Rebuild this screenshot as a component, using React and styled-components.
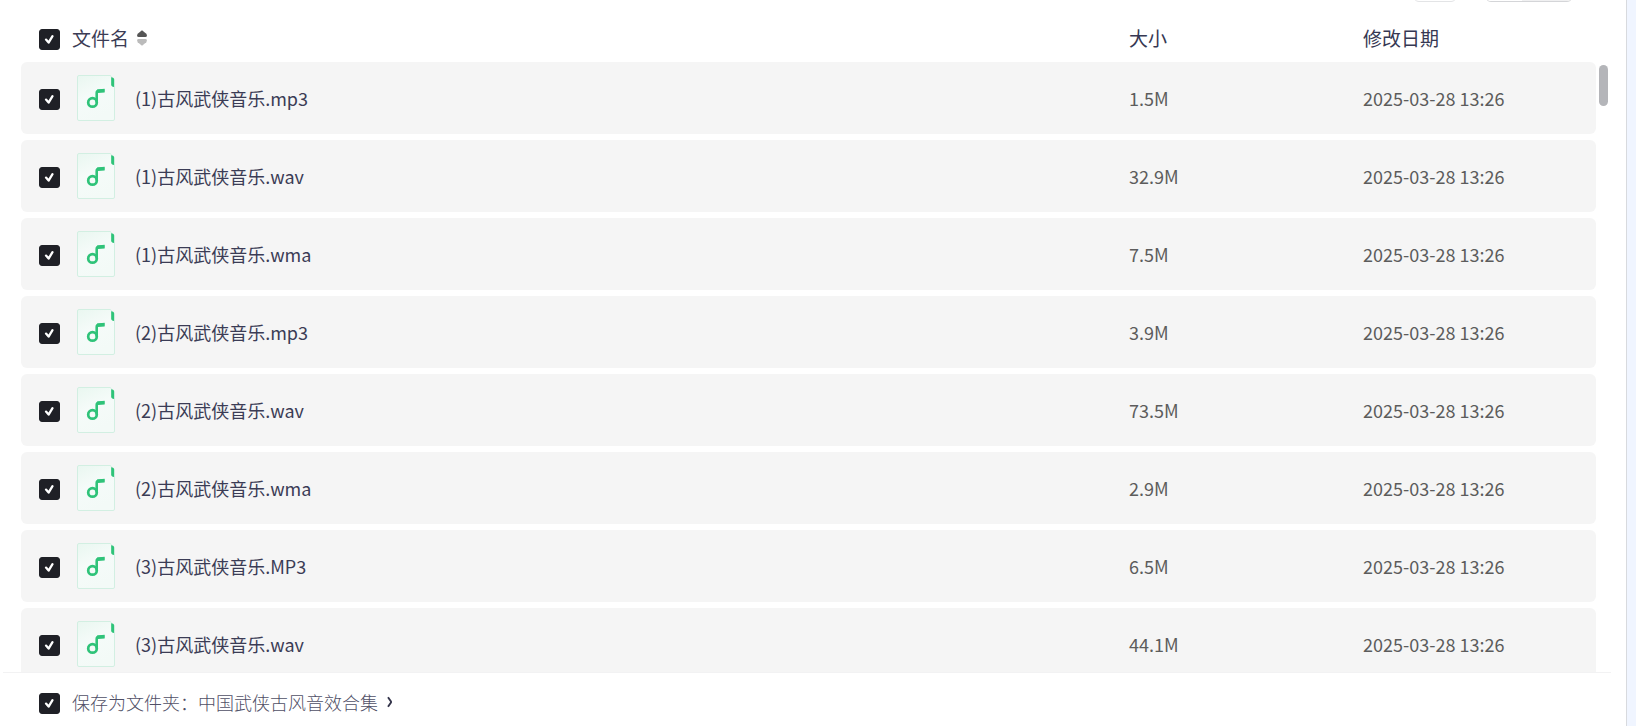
import { useState } from "react";
import styled, { createGlobalStyle } from "styled-components";

const GlobalStyle = createGlobalStyle`
  * {
    box-sizing: border-box;
  }

  body {
    margin: 0;
    background: #f0f5ff;
    font-family: "Noto Sans CJK SC", "Noto Sans", sans-serif;
    font-size: 18px;
    line-height: 26px;
    overflow: hidden;
  }
`;

const Panel = styled.main`
  display: flex;
  flex-direction: column;
  height: 100vh;
  margin-right: 9px;
  border-right: 1px solid #d8dade;
  background: #fff;
`;

const Toolbar = styled.div`
  display: flex;
  flex: none;
  justify-content: flex-end;
  align-items: flex-end;
  gap: 28px;
  height: 2px;
  padding-right: 53px;
  overflow: hidden;
`;

const ToolButton = styled.button`
  flex: none;
  width: 44px;
  height: 36px;
  border: 1px solid #e3e4e6;
  border-radius: 6px;
  background: #fff;
`;

const ViewSwitch = styled.div`
  display: flex;
  flex: none;
  width: 88px;
  height: 36px;
  border: 1px solid #d4d5d8;
  border-radius: 6px;
  overflow: hidden;

  button {
    flex: 1;
    border: none;
    background: #fff;
  }

  button[aria-pressed="true"] {
    flex: 0 0 50px;
    background: #f0f0f1;
  }
`;

const FileList = styled.section`
  position: relative;
  display: flex;
  flex: 1;
  min-height: 0;
  padding: 0 30px 0 21px;
`;

const FileTable = styled.table`
  display: flex;
  flex: 1;
  flex-direction: column;
  min-height: 0;

  tr {
    display: grid;
    grid-template-columns: minmax(0, 1fr) 234px 233px;
    align-items: center;
    padding-left: 18px;
  }

  th,
  td {
    padding: 0;
    text-align: left;
    font-weight: 400;
  }
`;

const Head = styled.thead`
  display: block;
  flex: none;
  font-size: 19px;
  color: #363853;

  tr {
    height: 60px;
    padding-top: 12px;
  }
`;

const Body = styled.tbody`
  display: flex;
  flex: 1;
  flex-direction: column;
  gap: 6px;
  min-height: 0;
  overflow-y: auto;
  scrollbar-width: none;
`;

const Row = styled.tr`
  flex: none;
  height: 72px;
  border-radius: 6px;
  background: #f5f5f5;
  color: #5c5c5c;
`;

const NameCell = styled.div`
  display: flex;
  align-items: center;

  label {
    color: #3b3c55;
  }
`;

const Check = styled.input`
  flex: none;
  width: 21px;
  height: 21px;
  margin: 2px 0 0;
  appearance: none;
  border: 1px solid #1f2026;
  border-radius: 3px;
  background: #fff;
  cursor: pointer;

  &:checked {
    background: #1f2026
      url("data:image/svg+xml,%3Csvg xmlns='http://www.w3.org/2000/svg' viewBox='0 0 19 19'%3E%3Cpath d='M6 9.6l2.6 3 3.9-6.4' fill='none' stroke='white' stroke-width='2.3' stroke-linecap='round' stroke-linejoin='round'/%3E%3C/svg%3E")
      center / 19px 19px no-repeat;
  }
`;

const HeadLabel = styled.label`
  margin-left: 12px;
`;

const SortButton = styled.button`
  display: flex;
  margin-left: 8px;
  padding: 0;
  border: none;
  background: none;
  cursor: pointer;
`;

const FileIcon = styled.svg`
  flex: none;
  width: 38px;
  height: 46px;
  margin: 0 20px 0 17px;
`;

const ScrollThumb = styled.div`
  position: absolute;
  top: 63px;
  right: 18px;
  width: 9px;
  height: 41px;
  border-radius: 5px;
  background: #b4b5b9;
`;

const Footer = styled.footer`
  display: flex;
  flex: none;
  align-items: center;
  height: 54px;
  margin: 0 15px 0 3px;
  padding: 5px 36px 0;
  border-top: 1px solid #f2f2f3;
  color: #504f66;
  font-weight: 300;

  label {
    margin-left: 12px;
  }
`;

const FolderButton = styled.button`
  display: flex;
  align-items: center;
  gap: 8px;
  padding: 0;
  border: none;
  background: none;
  color: inherit;
  font: inherit;
  cursor: pointer;
`;

const files = [
  { name: "(1)古风武侠音乐.mp3", size: "1.5M", date: "2025-03-28 13:26" },
  { name: "(1)古风武侠音乐.wav", size: "32.9M", date: "2025-03-28 13:26" },
  { name: "(1)古风武侠音乐.wma", size: "7.5M", date: "2025-03-28 13:26" },
  { name: "(2)古风武侠音乐.mp3", size: "3.9M", date: "2025-03-28 13:26" },
  { name: "(2)古风武侠音乐.wav", size: "73.5M", date: "2025-03-28 13:26" },
  { name: "(2)古风武侠音乐.wma", size: "2.9M", date: "2025-03-28 13:26" },
  { name: "(3)古风武侠音乐.MP3", size: "6.5M", date: "2025-03-28 13:26" },
  { name: "(3)古风武侠音乐.wav", size: "44.1M", date: "2025-03-28 13:26" },
];

const MusicFileIcon = () => (
  <FileIcon viewBox="0 0 38 46" aria-hidden="true">
    <defs>
      <linearGradient id="sheet" x1="0" y1="0" x2="0.4" y2="1">
        <stop offset="0" stopColor="#e9f7f0" />
        <stop offset="0.5" stopColor="#f5fbf9" />
        <stop offset="1" stopColor="#f3faf7" />
      </linearGradient>
    </defs>
    <path
      d="M2 .5h31.5l1 1.5v8.5l3 1.5v32a1.5 1.5 0 0 1-1.5 1.5H2A1.5 1.5 0 0 1 .5 44V2A1.5 1.5 0 0 1 2 .5z"
      fill="url(#sheet)"
      stroke="#d2efe2"
    />
    <path d="M34.2 2.2q3 .4 3 2.6v7.2q-3-.2-3-2.5z" fill="#2fc379" />
    <circle cx="15.5" cy="27.4" r="4.3" fill="none" stroke="#2fc379" strokeWidth="2.7" />
    <path
      d="M19.7 27.5V18q0-2 2-2.2l5.700-.4"
      fill="none"
      stroke="#2fc379"
      strokeWidth="2.6"
    />
    <path d="M20 14.5l7.6-.8v3.8l-6.6.6z" fill="#2fc379" />
  </FileIcon>
);

const App = () => {
  const [selected, setSelected] = useState(files.map((file) => file.name));
  const [asFolder, setAsFolder] = useState(true);
  const [scrolled, setScrolled] = useState(0);

  const toggle = (name) => {
    setSelected(
      selected.includes(name)
        ? selected.filter((item) => item !== name)
        : [...selected, name]
    );
  };

  const toggleAll = (e) => {
    setSelected(e.target.checked ? files.map((file) => file.name) : []);
  };

  return (
    <>
      <GlobalStyle />
      <Panel>
        <Toolbar>
          <ToolButton type="button" aria-label="刷新" />
          <ViewSwitch>
            <button type="button" aria-label="网格" aria-pressed="false" />
            <button type="button" aria-label="列表" aria-pressed="true" />
          </ViewSwitch>
        </Toolbar>
        <FileList>
          <FileTable>
            <Head>
              <tr>
                <th>
                  <NameCell>
                    <Check
                      type="checkbox"
                      id="all"
                      checked={selected.length === files.length}
                      onChange={toggleAll}
                    />
                    <HeadLabel htmlFor="all">文件名</HeadLabel>
                    <SortButton type="button" aria-label="排序">
                      <svg width="10" height="16" viewBox="0 0 10 16">
                        <path d="M5 .2l4.3 3.600q1.600 3.200-1 3.200H1.700q-2.600 0-1-3.200z" fill="#555" />
                        <path d="M5 15.8l4.3-3.600q1.600-3.200-1-3.200H1.700q-2.600 0-1 3.200z" fill="#bbb" />
                      </svg>
                    </SortButton>
                  </NameCell>
                </th>
                <th>大小</th>
                <th>修改日期</th>
              </tr>
            </Head>
            <Body onScroll={(e) => setScrolled(e.currentTarget.scrollTop)}>
              {files.map((file) => (
                <Row key={file.name}>
                  <td>
                    <NameCell>
                      <Check
                        type="checkbox"
                        id={file.name}
                        checked={selected.includes(file.name)}
                        onChange={() => toggle(file.name)}
                      />
                      <MusicFileIcon />
                      <label htmlFor={file.name}>{file.name}</label>
                    </NameCell>
                  </td>
                  <td>{file.size}</td>
                  <td>{file.date}</td>
                </Row>
              ))}
            </Body>
          </FileTable>
          <ScrollThumb style={{ transform: `translateY(${scrolled}px)` }} />
        </FileList>
        <Footer>
          <Check
            type="checkbox"
            id="folder"
            checked={asFolder}
            onChange={() => setAsFolder(!asFolder)}
          />
          <label htmlFor="folder">保存为文件夹：</label>
          <FolderButton type="button">
            中国武侠古风音效合集
            <svg width="8" height="12" viewBox="0 0 8 12" aria-hidden="true">
              <path d="M2 1.200L5 5.500v1L2 10.800" fill="none" stroke="#33344a" strokeWidth="1.900" />
            </svg>
          </FolderButton>
        </Footer>
      </Panel>
    </>
  );
};

export default App;
